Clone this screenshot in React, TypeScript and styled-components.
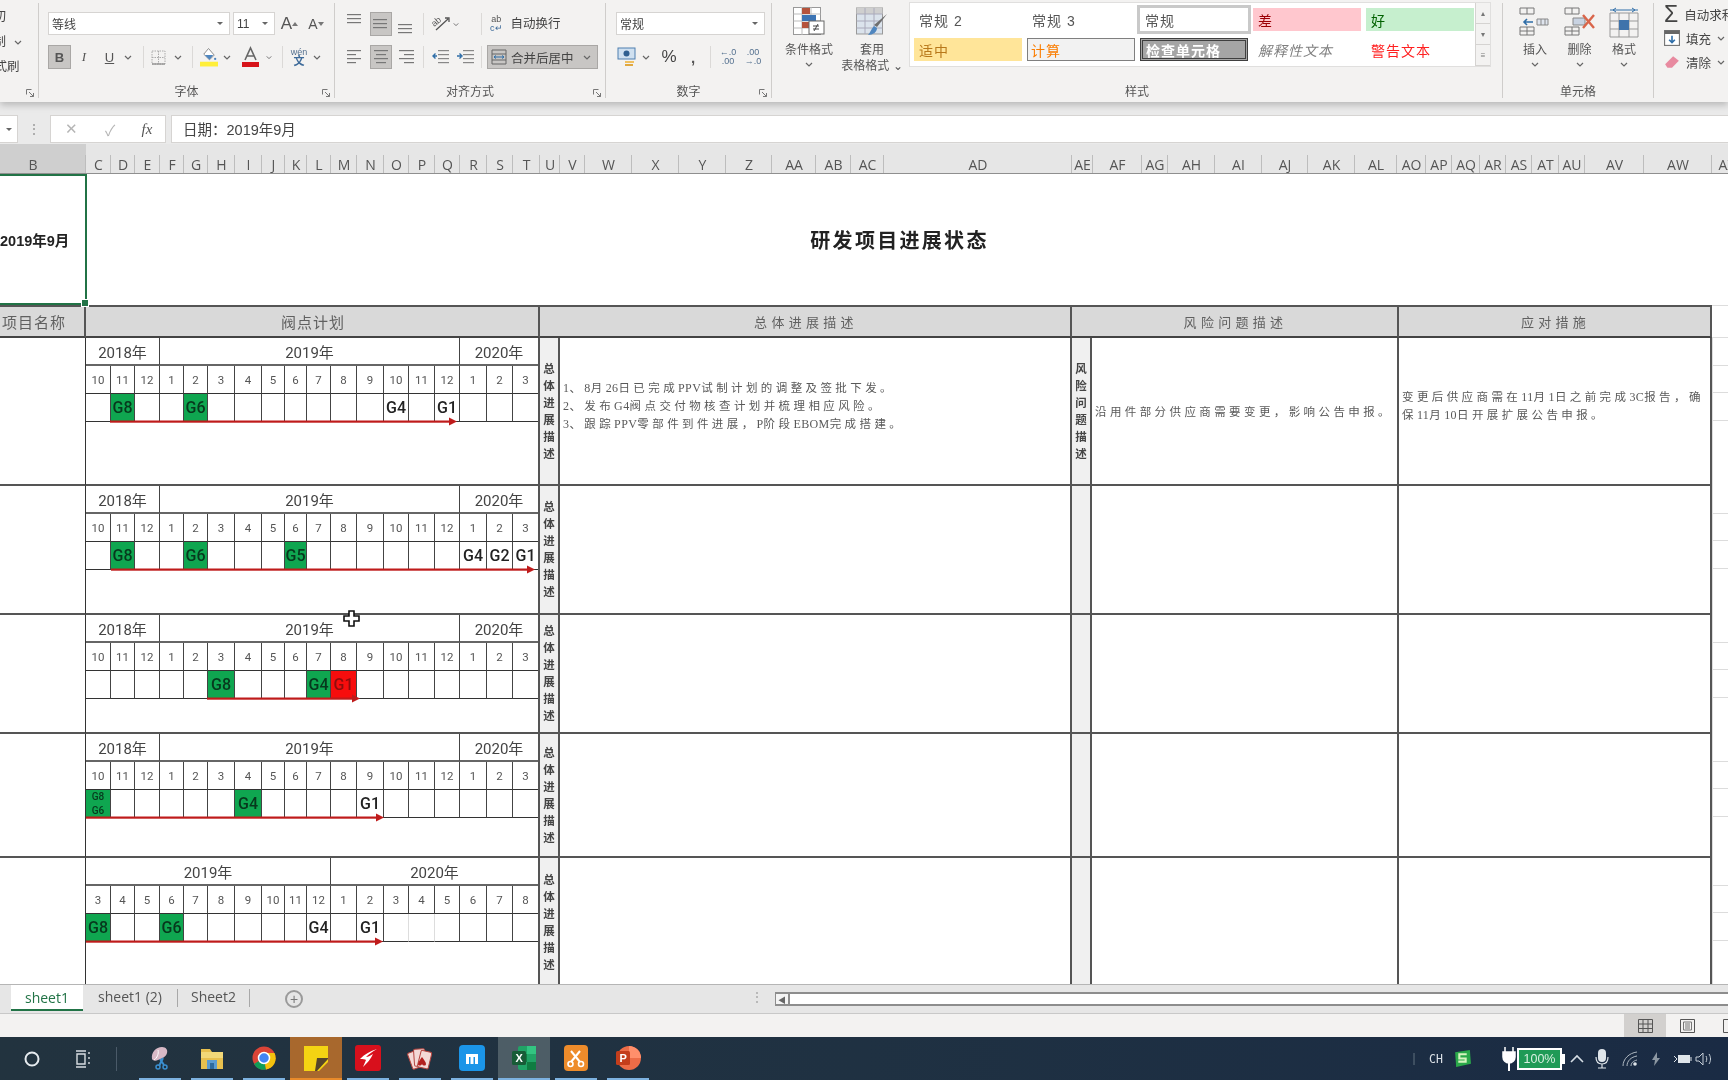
import React from "react";
import styled, { createGlobalStyle } from "styled-components";

const Global = createGlobalStyle`
  html, body { margin: 0; padding: 0; background: #fff; overflow: hidden; }
  * { box-sizing: border-box; }
`;

const CJK = `"Liberation Sans", "Noto Sans CJK SC", sans-serif`;

const Page = styled.div`
  width: 1728px; height: 1080px; display: flex; flex-direction: column; overflow: hidden;
  font-family: ${CJK}; color: #444; background: #fff; filter: blur(0.35px);
`;

/* ---------- Ribbon ---------- */
const Ribbon = styled.div`
  height: 102px; flex: none; display: flex; background: #f3f2f1; padding: 3px 0 4px;
  box-shadow: 0 3px 7px rgba(0,0,0,.22); position: relative; z-index: 2;
`;
const Group = styled.div<{ $w: number; $pt?: number; $clip?: boolean }>`
  width: ${p => p.$w}px; flex: none; position: relative; display: flex; flex-direction: column;
  border-right: 1px solid #cfcdcb; padding-top: ${p => p.$pt ?? 9}px; overflow: ${p => p.$clip ? "hidden" : "visible"};
`;
const GroupLabel = styled.div`
  margin-top: auto; height: 12px; line-height: 12px; font-size: 12px; text-align: center; color: #555;
`;
const Launcher = styled.svg`
  position: absolute; right: 3px; bottom: 0; width: 9px; height: 9px;
`;
const ClipRows = styled.div`
  display: flex; flex-direction: column; gap: 9px; font-size: 12.5px; color: #444;
  line-height: 16px; margin-top: -3px;
`;
const ClipText = styled.span<{ $ml: number }>`
  margin-left: ${p => p.$ml}px; white-space: nowrap; display: flex; align-items: center; gap: 8px;
`;
const Row = styled.div<{ $ml?: number; $mt?: number; $h?: number }>`
  display: flex; align-items: center; height: ${p => p.$h ?? 23}px;
  margin-left: ${p => p.$ml ?? 0}px; margin-top: ${p => p.$mt ?? 0}px; flex: none;
`;
const Combo = styled.div<{ $w: number; $mr?: number }>`
  width: ${p => p.$w}px; height: 23px; background: #fff; border: 1px solid #d6d4d2; display: flex; align-items: center;
  justify-content: space-between; padding: 0 6px 0 3px; font-size: 12px; color: #444; margin-right: ${p => p.$mr ?? 0}px; flex: none;
`;
const Caret = styled.span`
  width: 0; height: 0; border-left: 3px solid transparent; border-right: 3px solid transparent; border-top: 3px solid #666;
`;
const Cell = styled.div<{ $w: number; $ml?: number; $on?: boolean; $h?: number }>`
  width: ${p => p.$w}px; height: ${p => p.$h ?? 24}px; margin-left: ${p => p.$ml ?? 0}px; flex: none; display: flex; align-items: center; justify-content: center;
  background: ${p => p.$on ? "#c8c6c4" : "transparent"}; border: 1px solid ${p => p.$on ? "#a9a7a5" : "transparent"};
  font-size: 13px; color: #555;
`;
const Sep = styled.span<{ $l: number; $r: number }>`
  width: 1px; height: 22px; background: #dbd9d7; flex: none; margin: 0 ${p => p.$r}px 0 ${p => p.$l}px;
`;
const GrowA = styled.span<{ $s: number }>`
  font-size: ${p => p.$s}px; color: #555;
`;
const RibbonText = styled.span<{ $ml?: number; $s?: number; $up?: number }>`
  font-size: ${p => p.$s ?? 12}px; color: #444; margin-left: ${p => p.$ml ?? 0}px; white-space: nowrap; margin-bottom: ${p => p.$up ?? 0}px;
`;
const SmallStack = styled.span`
  display: flex; flex-direction: column; align-items: center; line-height: 9px; font-size: 9px; color: #54708f;
`;
const MergeBtn = styled.div`
  width: 111px; height: 24px; background: #c8c6c4; border: 1px solid #a9a7a5; display: flex; align-items: center; padding: 0 6px 0 3px;
  gap: 4px; font-size: 12.5px; color: #444; flex: none;
`;
const MergeCaret = styled.span`
  margin-left: auto; display: flex;
`;
const BigBtn = styled.div<{ $w: number }>`
  width: ${p => p.$w}px; flex: none; display: flex; flex-direction: column; align-items: center; font-size: 12px; line-height: 16px; color: #555;
`;
const BigIcon = styled.div`
  height: 34px; margin-bottom: 1px; display: flex; align-items: flex-start; justify-content: center; flex: none;
`;
const BigLine = styled.span`
  white-space: nowrap;
`;
const Flow = styled.div<{ $pl?: number }>`
  display: flex; padding-left: ${p => p.$pl ?? 0}px;
`;
const Gallery = styled.div`
  width: 582px; height: 65px; flex: none; margin-left: 6px; margin-top: -5px; background: #fff; border: 1px solid #e0dfde; display: flex;
`;
const GalleryGrid = styled.div`
  flex: 1; display: grid; grid-template-columns: repeat(5, 108px); grid-template-rows: 23px 23px; gap: 7px 5px; padding: 5px 0 0 4px;
`;
const StyleCell = styled.div<{ $bg?: string; $c?: string; $b?: string; $ring?: boolean; $i?: boolean; $bold?: boolean }>`
  background: ${p => p.$bg ?? "transparent"}; color: ${p => p.$c ?? "#555"}; border: ${p => p.$b ?? "none"};
  font-size: 14px; letter-spacing: 1px; padding-left: ${p => p.$b ? 3 : 5}px; display: flex; align-items: center; white-space: nowrap;
  font-style: ${p => p.$i ? "italic" : "normal"}; font-weight: ${p => p.$bold ? 700 : 400};
  box-shadow: ${p => p.$ring ? "0 0 0 3px #c9c9c9" : "none"};
`;
const GalleryScroll = styled.div`
  width: 15px; flex: none; border-left: 1px solid #d5d3d1; display: flex; flex-direction: column;
  background: #f3f2f1;
`;
const ScrollBtn = styled.div`
  flex: 1; display: flex; align-items: center; justify-content: center; border-bottom: 1px solid #d5d3d1; font-size: 8px; color: #777;
`;
const EditRows = styled.div`
  display: flex; flex-direction: column; padding-left: 10px; margin-top: -10px;
`;
const EditRow = styled.div`
  display: flex; align-items: center; height: 24px; gap: 6px; font-size: 12.5px; color: #444; white-space: nowrap;
`;
const Sigma = styled.span`
  font-size: 23px; line-height: 24px; width: 17px; text-align: center; color: #444; font-family: "Liberation Sans", sans-serif;
`;

/* ---------- Formula bar ---------- */
const FormulaBar = styled.div`
  height: 42px; flex: none; background: #eaeaea; display: flex; padding-top: 13px; align-items: stretch; padding-bottom: 1px;
`;
const NameBox = styled.div`
  width: 18px; background: #fff; border: 1px solid #d6d4d2; border-left: none; display: flex; align-items: center; justify-content: center;
`;
const Dots = styled.div`
  width: 32px; display: flex; align-items: center; justify-content: center; color: #999; font-size: 14px;
`;
const FxBox = styled.div`
  width: 116px; background: #fff; border: 1px solid #d6d4d2; display: flex; align-items: center; flex: none;
`;
const FxCell = styled.span<{ $w: number; $c?: string }>`
  width: ${p => p.$w}px; text-align: center; color: ${p => p.$c ?? "#b5b5b5"}; font-size: 15px; display: flex; justify-content: center;
`;
const FxLabel = styled.span`
  font-family: "Liberation Serif", serif; font-style: italic; font-size: 15px; color: #555; width: 36px; text-align: center;
`;
const FormulaInput = styled.div`
  flex: 1; margin-left: 5px; background: #fff; border: 1px solid #d6d4d2; border-right: none; display: flex; align-items: center; padding: 0 0 2px 11px;
  font-size: 14.5px; color: #444;
`;

/* ---------- Column headers ---------- */
const ColStrip = styled.div`
  height: 30px; flex: none; display: flex; background: #e6e6e6; border-bottom: 1px solid #8f8f8f; overflow: hidden;
`;
const ColHead = styled.div<{ $w: number; $on?: boolean }>`
  width: ${p => p.$w}px; flex: none; display: flex; align-items: center; justify-content: center; padding: 12px ${p => p.$on ? 20 : 0}px 0 0; font-size: 14px; color: #555;
  font-family: "Open Sans", sans-serif; background: ${p => p.$on ? "#cfcfcf" : "transparent"};
  position: relative; white-space: nowrap;
  &::after { content: ""; position: absolute; right: 0; top: 11px; bottom: 0; width: 1px; background: #bdbdbd; }
`;

/* ---------- Sheet ---------- */
const Sheet = styled.div`
  flex: 1; min-height: 0; overflow: hidden; position: relative; background: #fff;
`;
const TitleRow = styled.div`
  height: 131px; display: flex;
`;
const SelectedCell = styled.div`
  width: 87px; flex: none; border: 2px solid #217346; border-left: none; display: flex; align-items: center; font-size: 14.5px; font-weight: 700;
  color: #222; position: relative; white-space: nowrap;
  &::after { content: ""; position: absolute; right: -4px; bottom: -4px; width: 6px; height: 6px; background: #217346; border: 1px solid #fff; }
`;
const SheetTitle = styled.div`
  flex: 1; padding: 0 16px 0 0; display: flex; align-items: center; justify-content: center; font-size: 20px; font-weight: 700; color: #222; letter-spacing: 2.3px;
`;
const Columns = "86px 454px 20px 512px 20px 307px 313px 16px";
const HeaderRow = styled.div`
  height: 33px; display: grid; grid-template-columns: 86px 454px 532px 327px 313px 16px;
`;
const HeaderCell = styled.div<{ $ls?: number; $s?: number; $pl?: number; $pr?: number }>`
  background: #d9d9d9; border-right: 2px solid #555; border-top: 2px solid #555; border-bottom: 2px solid #444;
  display: flex; align-items: center; justify-content: center; font-size: ${p => p.$s ?? 15}px;
  letter-spacing: ${p => p.$ls ?? 1}px; color: #606060; white-space: nowrap; padding: 0 ${p => p.$pr ?? 0}px 1px ${p => p.$pl ?? 0}px;
`;
const HeaderEnd = styled.div`
  background: #fff; border-top: 1px solid #ddd; border-bottom: 1px solid #ddd;
`;
const ProjectRow = styled.div<{ $h: number }>`
  height: ${p => p.$h}px; display: grid; grid-template-columns: ${Columns};
  & > *:not(:last-child) { border-bottom: 2px solid #555; }
`;
const NameCell = styled.div`
  border-right: 1px solid #333;
`;
const Plan = styled.div`
  position: relative; border-right: 2px solid #555; overflow: visible;
`;
const Timeline = styled.div`
  display: grid; grid-template-columns: 25px 24px 25px 24px 24px 27px 27px 23px 22px 24px 26px 27px 25px 26px 25px 27px 26px 25px;
  grid-template-rows: 28px 28px 28px;
`;
const YearCell = styled.div<{ $span: number; $last?: boolean }>`
  grid-column: span ${p => p.$span}; border-right: ${p => p.$last ? "none" : "1px solid #444"}; border-bottom: 2px solid #666; display: flex; align-items: center; justify-content: center;
  font-size: 15px; font-family: "Roboto", "Noto Sans CJK SC", sans-serif; color: #444;
`;
const MonthCell = styled.div<{ $last?: boolean }>`
  border-right: ${p => p.$last ? "none" : "1px solid #444"}; border-bottom: 1px solid #333; display: flex; align-items: center; justify-content: center;
  font-size: 11.5px; font-family: "Roboto", sans-serif; color: #555;
`;
const MileCell = styled.div<{ $kind?: string; $last?: boolean; $light?: boolean; $small?: boolean }>`
  border-right: ${p => p.$last ? "none" : p.$light ? "1px solid #ddd" : "1px solid #444"}; border-bottom: 1px solid #333;
  background: ${p => p.$kind === "g" ? "#0fa650" : p.$kind === "r" ? "#f70d0d" : "#fff"};
  color: ${p => p.$kind === "g" ? "#07381d" : p.$kind === "r" ? "#8f0d0d" : "#222"};
  display: flex; flex-direction: ${p => p.$small ? "column" : "row"}; align-items: center; justify-content: ${p => p.$small ? "space-between" : "center"};
  font-family: "Roboto", sans-serif; font-size: ${p => p.$small ? 10 : 16}px; font-weight: 500; line-height: 13px; white-space: nowrap; overflow: hidden;
`;
const Arrow = styled.svg<{ $left: number }>`
  position: absolute; top: 78px; left: ${p => p.$left}px; height: 11px; overflow: visible;
`;
const SideLabel = styled.div`
  background: #f0f0f0; border-right: 2px solid #555; display: flex; align-items: center; justify-content: center; writing-mode: vertical-rl; text-orientation: upright;
  font-size: 11.5px; font-weight: 700; letter-spacing: 5.5px; color: #444; font-family: "Noto Sans CJK SC", sans-serif; white-space: nowrap; padding-top: 5px;
`;
const DescCell = styled.div<{ $pt?: number; $center?: boolean }>`
  border-right: 2px solid #555; font-size: 11.5px; line-height: 17px; color: #595959; letter-spacing: 3.4px; white-space: nowrap; padding: ${p => p.$pt ?? 0}px 0 0 3px;
  display: flex; flex-direction: column; justify-content: ${p => p.$center ? "center" : "flex-start"}; font-family: "Noto Sans CJK SC", sans-serif;
`;
const Latin = styled.span`
  letter-spacing: 0.4px; font-family: "Liberation Serif", serif; font-size: 12px;
`;
const Gutter = styled.div`
  display: grid; grid-template-rows: 28px 27px 28px; align-content: start; border-left: 1px solid #ddd;
`;
const GutterLine = styled.div`
  border-bottom: 1px solid #dcdcdc;
`;
const Cursor = styled.svg`
  position: absolute; left: 343px; top: 436px; width: 17px; height: 17px;
`;

/* ---------- Tab bar / status / taskbar ---------- */
const TabBar = styled.div`
  height: 30px; flex: none; background: #e6e6e6; border-top: 1px solid #b5b5b5; border-bottom: 1px solid #c8c8c8; display: flex; align-items: stretch; position: relative; z-index: 1;
`;
const Tab = styled.div<{ $w: number; $on?: boolean; $ml?: number }>`
  width: ${p => p.$w}px; flex: none; margin-left: ${p => p.$ml ?? 0}px; display: flex; align-items: center; justify-content: center; font-size: 14px;
  font-family: "Open Sans", sans-serif; color: ${p => p.$on ? "#217346" : "#555"}; background: ${p => p.$on ? "#fff" : "transparent"};
  border-bottom: ${p => p.$on ? "2px solid #217346" : "none"}; margin-bottom: ${p => p.$on ? 2 : 0}px; padding-bottom: ${p => p.$on ? 0 : 5}px;
`;
const TabSep = styled.span`
  width: 1px; background: #a8a8a8; margin: 4px 0 6px; flex: none;
`;
const AddTab = styled.div`
  width: 18px; height: 18px; margin: 5px 0 0 35px; border: 2px solid #9a9a9a; border-radius: 50%; display: flex; align-items: center; justify-content: center; color: #777; font-size: 14px; line-height: 1; flex: none;
`;
const TabDots = styled.div`
  margin-left: 445px; width: 18px; color: #aaa; text-align: center; font-size: 14px; padding-top: 4px; flex: none;
`;
const ScrollTrack = styled.div`
  flex: 1; margin: 7px 0 7px 9px; background: #fff; border-top: 2px solid #8d8d8d; border-bottom: 2px solid #8d8d8d; border-left: 1px solid #8d8d8d; display: flex;
`;
const ScrollArrow = styled.div`
  width: 14px; border-right: 2px solid #8d8d8d; background: #f4f4f4; display: flex; align-items: center; justify-content: center; font-size: 8px; color: #666;
`;
const StatusBar = styled.div`
  height: 23px; flex: none; background: #f3f2f1; display: flex; padding-left: 1624px; overflow: hidden;
`;
const ViewBtn = styled.div<{ $on?: boolean; $w: number }>`
  width: ${p => p.$w}px; flex: none; background: ${p => p.$on ? "#d2d0ce" : "transparent"}; display: flex; align-items: center; justify-content: center;
`;
const Taskbar = styled.div`
  height: 43px; flex: none; background: linear-gradient(90deg, #22333f 0%, #1f3142 50%, #1a2b44 100%); display: flex; overflow: hidden;
`;
const TaskCell = styled.div<{ $w: number; $ml?: number }>`
  width: ${p => p.$w}px; margin-left: ${p => p.$ml ?? 0}px; flex: none; display: flex; align-items: center; justify-content: center; color: #dfe5ea;
`;
const TaskSep = styled.div`
  width: 1px; height: 24px; align-self: center; background: #4a5a68; margin: 0 17px 0 14px; flex: none;
`;
const TaskBtn = styled.div<{ $bg?: string }>`
  width: 52px; flex: none; display: flex; flex-direction: column; background: ${p => p.$bg ?? "transparent"};
`;
const TaskIcon = styled.div`
  flex: 1; display: flex; align-items: center; justify-content: center; padding-top: 1px;
`;
const UnderBar = styled.div<{ $c?: string; $full?: boolean }>`
  height: 2px; background: ${p => p.$c ?? "#7db2e0"}; width: ${p => p.$full ? "100%" : "42px"}; align-self: center; flex: none;
`;
const Tray = styled.div`
  margin-left: auto; display: flex; align-items: center; width: 320px; flex: none;
`;
const TrayText = styled.span`
  font-family: "DejaVu Sans Mono", monospace; font-size: 11.5px; color: #dbe1e6; width: 32px; text-align: center; flex: none;
`;
const Battery = styled.div`
  width: 45px; height: 22px; border: 2px solid #fff; background: #1f9a56; color: #d8efe0; font-size: 12.5px; display: flex; align-items: center; justify-content: center; flex: none; position: relative; padding: 0;
  &::after { content: ""; position: absolute; right: -5px; top: 4px; width: 3px; height: 10px; background: #fff; }
`;

/* ---------- Drawn icons ---------- */
const ChevGlyph = () => (
  <svg width="8" height="5" viewBox="0 0 8 5"><path d="M1 1l3 3 3-3" fill="none" stroke="#666" strokeWidth="1.2" /></svg>
);
const Chev = ({ w = 10 }: { w?: number }) => (
  <Cell $w={w} $h={12}><ChevGlyph /></Cell>
);
const Lines = ({ pat, y = 0 }: { pat: number[][]; y?: number }) => (
  <svg width="16" height="20" viewBox="0 0 16 20">
    {pat.map((l, i) => <rect key={i} x={l[0]} y={y + i * 4} width={l[1]} height="1.2" fill="#777" />)}
  </svg>
);
const Launch = () => (
  <Launcher viewBox="0 0 9 9"><path d="M.5 .5h5M.5 .5v5M3 3l4.5 4.5M7.5 4v3.5H4" fill="none" stroke="#777" strokeWidth="1" /></Launcher>
);
const Indent = ({ flip }: { flip?: boolean }) => (
  <svg width="18" height="16" viewBox="0 0 18 16">
    {[1, 5, 9, 13].map(y => <rect key={y} x={7} y={y} width="11" height="1.2" fill="#888" />)}
    <path d={flip ? "M1 7h4M3.500 4.500L6 7l-2.500 2.500" : "M6 7H2M4.500 4.500L2 7l2.500 2.500"} stroke="#2f6ea8" strokeWidth="1.4" fill="none" />
  </svg>
);
const CondIcon = () => (
  <svg width="32" height="28" viewBox="0 0 32 28">
    <rect x=".5" y=".5" width="27" height="27" fill="#fff" stroke="#999" />
    <path d="M.5 7h27M.5 14h27M.5 21h27M9 0v28M18 0v28" stroke="#bbb" />
    <rect x="9" y="1" width="8" height="6" fill="#b5533c" />
    <rect x="9" y="8" width="14" height="6" fill="#3c74b4" />
    <rect x="9" y="15" width="9" height="6" fill="#b5533c" />
    <rect x="16" y="14" width="15" height="13" fill="#fff" stroke="#666" />
    <path d="M20 19h6M20 22h6M25 17l-4 7" stroke="#444" />
  </svg>
);
const TableFmtIcon = () => (
  <svg width="32" height="30" viewBox="0 0 32 30">
    <rect x=".5" y="1" width="26" height="26" fill="#dbe3ec" stroke="#999" />
    <rect x=".5" y="1" width="26" height="6" fill="#cfcfcf" />
    <path d="M.5 7h26M.5 14h26M.5 21h26M9 1v26M18 1v26" stroke="#aab" />
    <path d="M31 7L21 20l-3-2z" fill="#6f6f6f" />
    <path d="M18 19l3 2c0 4-4 7-9 7 2-2 3-6 6-9z" fill="#4f86bf" />
  </svg>
);
const InsertIcon = () => (
  <svg width="32" height="30" viewBox="0 0 32 30" fill="none">
    <path d="M1 1h14v6H1zM8 1v6M1 20h14v8H1zM1 24h14M8 20v8" stroke="#777" />
    <path d="M18 12h11v6H18zM22 12v6M26 12v6" stroke="#888" fill="#dfe5ee" />
    <path d="M14 15H5M8 12l-3 3 3 3" stroke="#2f6ea8" strokeWidth="1.6" />
  </svg>
);
const DeleteIcon = () => (
  <svg width="34" height="30" viewBox="0 0 34 30" fill="none">
    <path d="M2 1h14v6H2zM9 1v6M2 20h14v8H2zM2 24h14M9 20v8" stroke="#777" />
    <path d="M10 11h12v7H10z" stroke="#888" fill="#c9d3e2" />
    <path d="M20 8l11 13M31 8L20 21" stroke="#d9654a" strokeWidth="2.4" />
  </svg>
);
const FormatIcon = () => (
  <svg width="32" height="32" viewBox="0 0 32 32" fill="none">
    <path d="M2 6h28v24H2zM2 14h28M2 22h28M11 6v24M21 6v24" stroke="#999" />
    <rect x="11" y="13" width="10" height="10" fill="#3f73ab" />
    <path d="M2 3h28M5 3l3-2M5 3l3 2M27 3l-3-2M27 3l-3 2" stroke="#2f6ea8" />
  </svg>
);

const colsDef: [string, number][] = [
  ["B",86],["C",25],["D",24],["E",25],["F",24],["G",24],["H",27],["I",27],["J",23],["K",22],["L",24],["M",26],["N",27],["O",25],["P",26],["Q",25],["R",27],["S",26],["T",27],
  ["U",20],["V",25],["W",47],["X",47],["Y",47],["Z",46],["AA",44],["AB",35],["AC",33],["AD",188],["AE",21],["AF",49],["AG",26],["AH",47],["AI",47],["AJ",46],["AK",47],["AL",42],
  ["AO",29],["AP",26],["AQ",28],["AR",26],["AS",26],["AT",27],["AU",26],["AV",59],["AW",68],["AX",30],
];

type Mile = { at: number; t: string; k?: string; small?: boolean };
type Proj = { h: number; years: [string, number][]; months: number[]; miles: Mile[]; arrow: [number, number]; light?: number[]; };
const stdMonths = [10,11,12,1,2,3,4,5,6,7,8,9,10,11,12,1,2,3];
const stdYears: [string, number][] = [["2018年",3],["2019年",12],["2020年",3]];
const projects: Proj[] = [
  { h: 148, years: stdYears, months: stdMonths, arrow: [24, 371],
    miles: [{at:1,t:"G8",k:"g"},{at:4,t:"G6",k:"g"},{at:12,t:"G4"},{at:14,t:"G1"}] },
  { h: 129, years: stdYears, months: stdMonths, arrow: [25, 449],
    miles: [{at:1,t:"G8",k:"g"},{at:4,t:"G6",k:"g"},{at:8,t:"G5",k:"g"},{at:15,t:"G4"},{at:16,t:"G2"},{at:17,t:"G1"}] },
  { h: 119, years: stdYears, months: stdMonths, arrow: [121, 274],
    miles: [{at:5,t:"G8",k:"g"},{at:9,t:"G4",k:"g"},{at:10,t:"G1",k:"r"}] },
  { h: 124, years: stdYears, months: stdMonths, arrow: [0, 298],
    miles: [{at:0,t:"G8 G6",k:"g",small:true},{at:6,t:"G4",k:"g"},{at:11,t:"G1"}] },
  { h: 130, years: [["2019年",10],["2020年",8]], months: [3,4,5,6,7,8,9,10,11,12,1,2,3,4,5,6,7,8], arrow: [0, 297], light: [12,13],
    miles: [{at:0,t:"G8",k:"g"},{at:3,t:"G6",k:"g"},{at:9,t:"G4"},{at:11,t:"G1"}] },
];

/* Latin runs sit tighter than the Chinese text around them, as in the sheet's own font. */
const Mixed = ({ text }: { text: string }) => (
  <span>
    {text.split(/([A-Za-z0-9]+)/).map((s, i) => (i % 2 ? <Latin key={i}>{s}</Latin> : s))}
  </span>
);

const Project = ({ p, first }: { p: Proj; first: boolean }) => (
  <ProjectRow $h={p.h}>
    <NameCell />
    <Plan>
      <Timeline>
        {p.years.map(([y, n], i) => <YearCell key={i} $span={n} $last={i === p.years.length - 1}>{y}</YearCell>)}
        {p.months.map((m, i) => <MonthCell key={i} $last={i === 17}>{m}</MonthCell>)}
        {p.months.map((_, i) => {
          const mile = p.miles.find(x => x.at === i);
          return (
            <MileCell key={i} $kind={mile?.k} $last={i === 17} $light={p.light?.includes(i)} $small={mile?.small}>
              {mile?.small ? mile.t.split(" ").map(s => <span key={s}>{s}</span>) : mile?.t}
            </MileCell>
          );
        })}
      </Timeline>
      <Arrow $left={p.arrow[0]} width={p.arrow[1] - p.arrow[0]} viewBox={`0 0 ${p.arrow[1] - p.arrow[0]} 11`}>
        <rect x="0" y="4.5" width={p.arrow[1] - p.arrow[0] - 7} height="2.2" fill="#bf1b1b" />
        <polygon points={`${p.arrow[1] - p.arrow[0] - 8},1.5 ${p.arrow[1] - p.arrow[0]},5.5 ${p.arrow[1] - p.arrow[0] - 8},9.5`} fill="#bf1b1b" />
      </Arrow>
    </Plan>
    <SideLabel>总体进展描述</SideLabel>
    {first ? (
      <DescCell $pt={41}>
        <Mixed text={"1、8月26日已完成PPV试制计划的调整及签批下发。"} />
        <Mixed text={"2、发布G4阀点交付物核查计划并梳理相应风险。"} />
        <Mixed text={"3、跟踪PPV零部件到件进展\uFF0CP阶段EBOM完成搭建。"} />
      </DescCell>
    ) : <DescCell />}
    <SideLabel>{first ? "风险问题描述" : ""}</SideLabel>
    {first ? <DescCell $center><Mixed text={"沿用件部分供应商需要变更\uFF0C影响公告申报。"} /></DescCell> : <DescCell />}
    {first ? (
      <DescCell $pt={50}>
        <Mixed text={"变更后供应商需在11月1日之前完成3C报告\uFF0C确"} />
        <Mixed text={"保11月10日开展扩展公告申报。"} />
      </DescCell>
    ) : <DescCell />}
    <Gutter><GutterLine /><GutterLine /><GutterLine /></Gutter>
  </ProjectRow>
);

export default function App() {
  return (
    <Page>
      <Global />
      <Ribbon>
        <Group $w={39} $clip>
          <ClipRows>
            <ClipText $ml={-19}>剪切</ClipText>
            <ClipText $ml={-19}>复制<ChevGlyph /></ClipText>
            <ClipText $ml={-18}>格式刷</ClipText>
          </ClipRows>
          <GroupLabel />
          <Launch />
        </Group>

        <Group $w={296}>
          <Row $ml={9}>
            <Combo $w={182} $mr={3}>等线<Caret /></Combo>
            <Combo $w={42}>11<Caret /></Combo>
            <Cell $w={29}><GrowA $s={17}>A</GrowA><svg width="6" height="4" viewBox="0 0 6 4"><path d="M0 4l3-4 3 4z" fill="#777" /></svg></Cell>
            <Cell $w={24}><GrowA $s={14}>A</GrowA><svg width="6" height="4" viewBox="0 0 6 4"><path d="M0 0l3 4 3-4z" fill="#777" /></svg></Cell>
          </Row>
          <Row $ml={9} $mt={10} $h={24}>
            <Cell $w={23} $on><b>B</b></Cell>
            <Cell $w={26}><i style={{ fontFamily: "Liberation Serif" }}>I</i></Cell>
            <Cell $w={25}><u>U</u></Cell>
            <Chev w={12} />
            <Sep $l={9} $r={5} />
            <Cell $w={18}>
              <svg width="15" height="15" viewBox="0 0 15 15" fill="none"><path d="M1 1h13v13H1zM7.500 1v13M1 7.500h13" stroke="#aaa" strokeDasharray="1.5 1" /><path d="M1 14h13" stroke="#777" /></svg>
            </Cell>
            <Chev w={22} />
            <Sep $l={3} $r={6} />
            <Cell $w={20}>
              <svg width="19" height="22" viewBox="0 0 19 22" fill="none"><path d="M9 2l6 7-5 5-6-6z" stroke="#888" fill="#fff" /><path d="M5 9h9l-4 5z" fill="#4f86bf" /><circle cx="16" cy="13" r="1.2" fill="#4f86bf" /><rect x="0" y="16" width="19" height="5" fill="#ffef3a" /></svg>
            </Cell>
            <Chev w={16} />
            <Cell $w={30}>
              <svg width="19" height="22" viewBox="0 0 19 22" fill="none"><path d="M4 14l5.500-12L15 14M6 10h7" stroke="#666" strokeWidth="1.6" /><rect x="1" y="16" width="17" height="5" fill="#d7141a" /></svg>
            </Cell>
            <Chev w={8} />
            <Sep $l={9} $r={6} />
            <Cell $w={20}>
              <SmallStack><span>wén</span><b style={{ fontSize: 11, color: "#3d6a99" }}>文</b></SmallStack>
            </Cell>
            <Chev w={16} />
          </Row>
          <GroupLabel>字体</GroupLabel>
          <Launch />
        </Group>

        <Group $w={271}>
          <Row $ml={9} $h={24}>
            <Cell $w={22}><Lines pat={[[0,14],[0,14],[0,14]]} y={0} /></Cell>
            <Cell $w={22} $ml={4} $on><Lines pat={[[0,14],[0,14],[0,14]]} y={5} /></Cell>
            <Cell $w={22} $ml={3}><Lines pat={[[0,14],[0,14],[0,14]]} y={10} /></Cell>
            <Sep $l={6} $r={6} />
            <Cell $w={22}><svg width="20" height="20" viewBox="0 0 20 20" fill="none"><path d="M5 16L17 5M14 4h4v4" stroke="#555" strokeWidth="1.3" /><text x="1" y="11" fontSize="9" fill="#555" fontFamily="Liberation Sans" transform="rotate(-40 5 9)">ab</text></svg></Cell>
            <Chev w={8} />
            <Sep $l={21} $r={8} />
            <SmallStack><span style={{ color: "#555" }}>ab</span><span style={{ color: "#3d6a99" }}>c↵</span></SmallStack>
            <RibbonText $ml={8} $s={12.5} $up={3}>自动换行</RibbonText>
          </Row>
          <Row $ml={9} $mt={9} $h={24}>
            <Cell $w={22}><Lines pat={[[0,14],[0,9],[0,14],[0,9]]} y={3} /></Cell>
            <Cell $w={22} $ml={4} $on><Lines pat={[[1,14],[3,10],[1,14],[3,10]]} y={3} /></Cell>
            <Cell $w={22} $ml={3}><Lines pat={[[1,15],[6,10],[1,15],[6,10]]} y={3} /></Cell>
            <Sep $l={6} $r={6} />
            <Cell $w={20}><Indent /></Cell>
            <Cell $w={20} $ml={5}><Indent flip /></Cell>
            <Sep $l={6} $r={5} />
            <MergeBtn>
              <svg width="16" height="16" viewBox="0 0 16 16" fill="none"><path d="M1 1h14v14H1zM1 5h14M1 11h14" stroke="#666" /><path d="M3 8h10M3 8l2-1.5M3 8l2 1.5M13 8l-2-1.5M13 8l-2 1.5" stroke="#2f6ea8" /></svg>
              合并后居中
              <MergeCaret><ChevGlyph /></MergeCaret>
            </MergeBtn>
          </Row>
          <GroupLabel>对齐方式</GroupLabel>
          <Launch />
        </Group>

        <Group $w={166}>
          <Row $ml={10}><Combo $w={149}>常规<Caret /></Combo></Row>
          <Row $ml={10} $mt={10} $h={24}>
            <Cell $w={22}><svg width="20" height="20" viewBox="0 0 20 20" fill="none"><rect x="1" y="1" width="17" height="11" fill="#cfe0f0" stroke="#4f7fb0" /><circle cx="9.500" cy="6.500" r="3" fill="#2f5f90" /><rect x="8" y="14" width="9" height="2" fill="#f0c060" /><rect x="8" y="17" width="8" height="2" fill="#e0a840" /></svg></Cell>
            <Cell $w={10} $ml={3} $h={12}><ChevGlyph /></Cell>
            <Cell $w={20} $ml={8}><RibbonText $s={17}>%</RibbonText></Cell>
            <Cell $w={20} $ml={4}><b style={{ fontSize: 15 }}>,</b></Cell>
            <Sep $l={7} $r={7} />
            <Cell $w={20}><SmallStack><span>←.0</span><span>.00</span></SmallStack></Cell>
            <Cell $w={20} $ml={5}><SmallStack><span>.00</span><span>→.0</span></SmallStack></Cell>
          </Row>
          <GroupLabel>数字</GroupLabel>
          <Launch />
        </Group>

        <Group $w={731} $pt={4}>
          <Flow $pl={5}>
            <BigBtn $w={64}>
              <BigIcon><CondIcon /></BigIcon>
              <BigLine>条件格式</BigLine>
              <Chev w={10} />
            </BigBtn>
            <BigBtn $w={62}>
              <BigIcon><TableFmtIcon /></BigIcon>
              <BigLine>套用</BigLine>
              <BigLine>表格格式 ⌄</BigLine>
            </BigBtn>
            <Gallery>
              <GalleryGrid>
                <StyleCell>常规 2</StyleCell>
                <StyleCell>常规 3</StyleCell>
                <StyleCell $ring $bg="#fff">常规</StyleCell>
                <StyleCell $bg="#ffc7ce" $c="#9c0006">差</StyleCell>
                <StyleCell $bg="#c6efce" $c="#006100">好</StyleCell>
                <StyleCell $bg="#ffe599" $c="#b8781a">适中</StyleCell>
                <StyleCell $bg="#f2f2f2" $c="#fa7d00" $b="1px solid #7f7f7f">计算</StyleCell>
                <StyleCell $bg="#a5a5a5" $c="#fff" $b="3px double #3f3f3f" $bold>检查单元格</StyleCell>
                <StyleCell $c="#7f7f7f" $i>解释性文本</StyleCell>
                <StyleCell $c="#ff2020">警告文本</StyleCell>
              </GalleryGrid>
              <GalleryScroll>
                <ScrollBtn>▴</ScrollBtn>
                <ScrollBtn>▾</ScrollBtn>
                <ScrollBtn>≡</ScrollBtn>
              </GalleryScroll>
            </Gallery>
          </Flow>
          <GroupLabel>样式</GroupLabel>
        </Group>

        <Group $w={151} $pt={4}>
          <Flow $pl={10}>
            <BigBtn $w={44}><BigIcon><InsertIcon /></BigIcon><BigLine>插入</BigLine><Chev /></BigBtn>
            <BigBtn $w={45}><BigIcon><DeleteIcon /></BigIcon><BigLine>删除</BigLine><Chev /></BigBtn>
            <BigBtn $w={44}><BigIcon><FormatIcon /></BigIcon><BigLine>格式</BigLine><Chev /></BigBtn>
          </Flow>
          <GroupLabel>单元格</GroupLabel>
        </Group>

        <Group $w={80}>
          <EditRows>
            <EditRow><Sigma>Σ</Sigma>自动求和</EditRow>
            <EditRow>
              <svg width="16" height="16" viewBox="0 0 14 14" fill="none"><rect x=".5" y=".5" width="13" height="13" fill="#fff" stroke="#777" /><rect x=".5" y=".5" width="13" height="3" fill="#666" /><path d="M7 5v6M4.500 8.500L7 11l2.500-2.500" stroke="#2f6ea8" strokeWidth="1.4" /></svg>
              填充 <ChevGlyph />
            </EditRow>
            <EditRow>
              <svg width="16" height="16" viewBox="0 0 14 14"><path d="M1 9l7-7 5 4-6 6H3z" fill="#e88aa0" /></svg>
              清除 <ChevGlyph />
            </EditRow>
          </EditRows>
        </Group>
      </Ribbon>

      <FormulaBar>
        <NameBox><Caret /></NameBox>
        <Dots>⋮</Dots>
        <FxBox>
          <FxCell $w={40}>✕</FxCell>
          <FxCell $w={38}>✓</FxCell>
          <FxLabel>fx</FxLabel>
        </FxBox>
        <FormulaInput>{"日期\uFF1A2019年9月"}</FormulaInput>
      </FormulaBar>

      <ColStrip>
        {colsDef.map(([n, w]) => <ColHead key={n} $w={w} $on={n === "B"}>{n}</ColHead>)}
      </ColStrip>

      <Sheet>
        <TitleRow>
          <SelectedCell>2019年9月</SelectedCell>
          <SheetTitle>研发项目进展状态</SheetTitle>
        </TitleRow>
        <HeaderRow>
          <HeaderCell $pr={16}>项目名称</HeaderCell>
          <HeaderCell $pl={2}>阀点计划</HeaderCell>
          <HeaderCell $s={13} $ls={4.3} $pl={2}>总体进展描述</HeaderCell>
          <HeaderCell $s={13} $ls={4.3} $pl={2}>风险问题描述</HeaderCell>
          <HeaderCell $s={13} $ls={4.3} $pl={2}>应对措施</HeaderCell>
          <HeaderEnd />
        </HeaderRow>
        {projects.map((p, i) => <Project key={i} p={p} first={i === 0} />)}
        <Cursor viewBox="0 0 17 17"><path d="M6 1h5v5h5v5h-5v5H6v-5H1V6h5z" fill="#fff" stroke="#111" strokeWidth="1.6" /></Cursor>
      </Sheet>

      <TabBar>
        <Tab $w={72} $ml={11} $on>sheet1</Tab>
        <Tab $w={94}>sheet1 (2)</Tab>
        <TabSep />
        <Tab $w={71}>Sheet2</Tab>
        <TabSep />
        <AddTab>+</AddTab>
        <TabDots>⋮</TabDots>
        <ScrollTrack><ScrollArrow>◀</ScrollArrow></ScrollTrack>
      </TabBar>

      <StatusBar>
        <ViewBtn $w={42} $on>
          <svg width="15" height="14" viewBox="0 0 15 14" fill="none"><path d="M.5 .5h14v13H.5zM5 .5v13M10 .5v13M.5 5h14M.5 9.500h14" stroke="#555" /></svg>
        </ViewBtn>
        <ViewBtn $w={43}>
          <svg width="15" height="14" viewBox="0 0 15 14" fill="none"><path d="M.5 .5h14v13H.5z" stroke="#555" /><path d="M3.500 3h8v8h-8zM5 5h5M5 7h5M5 9h5" stroke="#777" /></svg>
        </ViewBtn>
        <ViewBtn $w={42}>
          <svg width="15" height="14" viewBox="0 0 15 14" fill="none"><path d="M.5 .5h6v13h-6zM8.500 .5h6v13h-6z" stroke="#555" /></svg>
        </ViewBtn>
      </StatusBar>

      <Taskbar>
        <TaskCell $w={63}><svg width="16" height="16" viewBox="0 0 16 16" fill="none"><circle cx="8" cy="8" r="6.500" stroke="#e6ebef" strokeWidth="2" /></svg></TaskCell>
        <TaskCell $w={39}><svg width="18" height="18" viewBox="0 0 18 18" fill="none"><path d="M2 1h10M2 17h10M3 4h8v10H3zM15 2v2M15 7v2M15 12v2" stroke="#d7dde2" strokeWidth="1.400" /></svg></TaskCell>
        <TaskSep />
        <TaskBtn><TaskIcon>
          <svg width="26" height="26" viewBox="0 0 26 26"><path d="M5 14C4 7 9 2 15 2c4 0 6 3 5 6-1 4-6 6-9 7-2 1-5 1-6-1z" fill="#d8b9c6" /><path d="M11 5c1 4-1 8-4 10" stroke="#fff" fill="none" /><path d="M13 14l4 6M16 13l-4 8" stroke="#3a8fd0" strokeWidth="2" /><circle cx="18" cy="22" r="2" fill="none" stroke="#3a8fd0" strokeWidth="1.500" /><circle cx="11" cy="22" r="2" fill="none" stroke="#3a8fd0" strokeWidth="1.500" /></svg>
        </TaskIcon><UnderBar /></TaskBtn>
        <TaskBtn><TaskIcon>
          <svg width="24" height="24" viewBox="0 0 24 24"><path d="M1 3h9l2 3h11v17H1z" fill="#e8c04e" /><rect x="1" y="6" width="22" height="6" fill="#f2d878" /><rect x="7" y="14" width="10" height="9" fill="#5b9bd0" /><rect x="10" y="17" width="4" height="6" fill="#2e6a9e" /></svg>
        </TaskIcon><UnderBar /></TaskBtn>
        <TaskBtn><TaskIcon>
          <svg width="24" height="24" viewBox="0 0 24 24"><circle cx="12" cy="12" r="11.500" fill="#db4437" /><path d="M12 12L2 18A11.500 11.500 0 0 0 14 23.500z" fill="#0f9d58" /><path d="M12 12l2 11.500A11.500 11.500 0 0 0 22.500 7H12z" fill="#f4c20d" /><circle cx="12" cy="12" r="5.500" fill="#4285f4" stroke="#fff" strokeWidth="1.500" /></svg>
        </TaskIcon><UnderBar /></TaskBtn>
        <TaskBtn $bg="#a8682d"><TaskIcon>
          <svg width="24" height="25" viewBox="0 0 24 25"><path d="M0 0h24v16l-9 9H0z" fill="#f4d313" /><path d="M24 12v1L13 25h-2l2-13z" fill="#55452a" /></svg>
        </TaskIcon><UnderBar $c="#e88a2a" $full /></TaskBtn>
        <TaskBtn><TaskIcon>
          <svg width="26" height="26" viewBox="0 0 26 26"><rect width="26" height="26" rx="3" fill="#d8101c" /><path d="M22 4C15 6 10 9 5 14c3 0 5 0 6 1l-3 7c4-4 8-8 10-13-3 2-5 3-7 3 3-3 7-6 11-8z" fill="#fff" /></svg>
        </TaskIcon><UnderBar /></TaskBtn>
        <TaskBtn><TaskIcon>
          <svg width="26" height="26" viewBox="0 0 26 26"><g stroke="#b4443f" fill="#f3d9d6"><rect x="3" y="6" width="11" height="17" rx="1.500" transform="rotate(-20 9 15)" /><rect x="7" y="4" width="11" height="17" rx="1.500" transform="rotate(-4 12 12)" /><rect x="12" y="6" width="11" height="17" rx="1.500" transform="rotate(14 17 15)" /></g><path d="M15 12c2 3 4 5 4 7 0 2-3 2-4 0-1 2-4 2-4 0 0-2 2-4 4-7z" fill="#b3201f" /></svg>
        </TaskIcon><UnderBar /></TaskBtn>
        <TaskBtn><TaskIcon>
          <svg width="26" height="26" viewBox="0 0 26 26"><rect width="26" height="26" rx="4" fill="#1b95e8" /><path d="M7 9h12v10h-3v-7h-1.500v7h-3v-7H10v7H7z" fill="#fff" /></svg>
        </TaskIcon><UnderBar /></TaskBtn>
        <TaskBtn $bg="#4d5d66"><TaskIcon>
          <svg width="26" height="26" viewBox="0 0 26 26"><rect x="7" y="1" width="18" height="24" rx="2" fill="#21a366" /><rect x="16" y="1" width="9" height="8" fill="#33c481" /><rect x="16" y="17" width="9" height="8" fill="#107c41" /><rect x="7" y="9" width="9" height="8" fill="#107c41" /><rect x="1" y="6" width="14" height="14" rx="1.500" fill="#185c37" /><text x="4.500" y="17" fontSize="11" fontWeight="700" fill="#fff" fontFamily="Liberation Sans">X</text></svg>
        </TaskIcon><UnderBar $full /></TaskBtn>
        <TaskBtn><TaskIcon>
          <svg width="26" height="26" viewBox="0 0 26 26"><rect x="1" width="24" height="26" rx="4" fill="#ee8c2b" /><path d="M8 6l9 11M17 6L8 17" stroke="#fff" strokeWidth="2" /><circle cx="7.500" cy="19" r="2.500" fill="none" stroke="#fff" strokeWidth="1.600" /><circle cx="18" cy="19" r="2.500" fill="none" stroke="#fff" strokeWidth="1.600" /></svg>
        </TaskIcon><UnderBar /></TaskBtn>
        <TaskBtn><TaskIcon>
          <svg width="26" height="26" viewBox="0 0 26 26"><circle cx="14" cy="13" r="12" fill="#ed6c47" /><path d="M14 1a12 12 0 0 1 12 12H14z" fill="#ff8f6b" /><rect x="1" y="6" width="14" height="14" rx="1.500" fill="#c43e1c" /><text x="4.500" y="17" fontSize="11" fontWeight="700" fill="#fff" fontFamily="Liberation Sans">P</text></svg>
        </TaskIcon><UnderBar /></TaskBtn>
        <Tray>
          <TaskCell $w={2} $ml={5}><svg width="3" height="18" viewBox="0 0 3 18"><path d="M.5 0v18M2.500 0v18" stroke="#5a6a78" /></svg></TaskCell>
          <TaskCell $w={5} />
          <TrayText>CH</TrayText>
          <TaskCell $w={20}><svg width="19" height="19" viewBox="0 0 18 18"><path d="M2 3l14-2 1 13-14 3z" fill="#2aa84a" /><path d="M13 5H6v4h6v3H5" fill="none" stroke="#d7f4c0" strokeWidth="2" /></svg></TaskCell>
          <TaskCell $w={17} $ml={28}><svg width="14" height="24" viewBox="0 0 14 24"><path d="M3 0v5M11 0v5M1 5h12v5a6 6 0 0 1-12 0z" fill="#fff" stroke="#fff" strokeWidth="1.500" /><rect x="6" y="15" width="2" height="9" fill="#fff" /></svg></TaskCell>
          <Battery>100%</Battery>
          <TaskCell $w={20} $ml={5}><svg width="14" height="9" viewBox="0 0 14 9"><path d="M1 8l6-6 6 6" fill="none" stroke="#d5dde4" strokeWidth="1.600" /></svg></TaskCell>
          <TaskCell $w={20} $ml={5}><svg width="14" height="22" viewBox="0 0 14 22" fill="none"><rect x="3" y="1" width="8" height="13" rx="4" fill="#dfe5ea" /><path d="M1 9c0 5 3 7 6 7s6-2 6-7M7 16v4M3 20h8" stroke="#dfe5ea" strokeWidth="1.200" /></svg></TaskCell>
          <TaskCell $w={20} $ml={8}><svg width="16" height="16" viewBox="0 0 16 16" fill="none" stroke="#aeb8c1"><path d="M1 15C1 8 7 2 15 1M5 15c0-5 4-9 10-10M9 15c0-3 2-5 6-6" /><circle cx="13" cy="13" r="1.800" fill="#dfe5ea" stroke="none" /></svg></TaskCell>
          <TaskCell $w={16} $ml={8}><svg width="10" height="14" viewBox="0 0 10 14"><path d="M6 0L1 8h3l-1 6 6-8H6z" fill="#8d98a3" /></svg></TaskCell>
          <TaskCell $w={24} $ml={7}><svg width="18" height="12" viewBox="0 0 18 12" fill="none"><rect x="4" y="2" width="12" height="8" fill="#dfe5ea" /><path d="M17 4v4M0 3l3 3-3 3" stroke="#dfe5ea" /></svg></TaskCell>
          <TaskCell $w={18}><svg width="18" height="14" viewBox="0 0 18 14" fill="none" stroke="#c5ced6"><path d="M1 5h3l4-4v12L4 9H1zM11 4c1 2 1 4 0 6M14 2c2 3 2 7 0 10" /></svg></TaskCell>
        </Tray>
      </Taskbar>
    </Page>
  );
}
